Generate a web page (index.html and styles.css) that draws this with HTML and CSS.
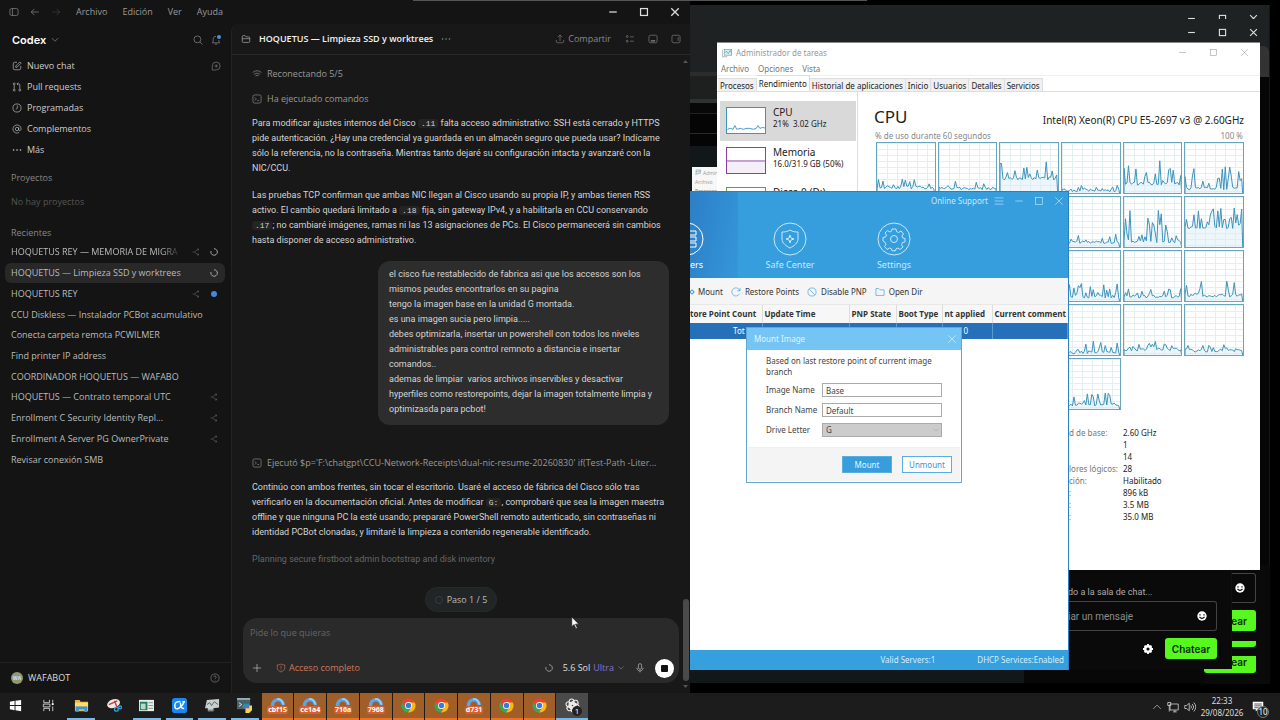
FILE: index.html
```html
<!DOCTYPE html>
<html lang="es">
<head>
<meta charset="utf-8">
<title>Escritorio</title>
<link rel="stylesheet" href="styles.css">
</head>
<body>
<svg class="defs" aria-hidden="true">
  <symbol id="i-panel" viewBox="0 0 16 16"><rect x="1.500" y="2.500" width="13" height="11" rx="2.500"/><path d="M5.500 2.500v11"/></symbol>
  <symbol id="i-back" viewBox="0 0 16 16"><path d="M14 8H2M7 3 2 8l5 5"/></symbol>
  <symbol id="i-fwd" viewBox="0 0 16 16"><path d="M2 8h12M9 3l5 5-5 5"/></symbol>
  <symbol id="i-min" viewBox="0 0 16 16"><path d="M2 8h12"/></symbol>
  <symbol id="i-max" viewBox="0 0 16 16"><rect x="2.500" y="2.500" width="11" height="11"/></symbol>
  <symbol id="i-x" viewBox="0 0 16 16"><path d="m2 2 12 12M14 2 2 14"/></symbol>
  <symbol id="i-down" viewBox="0 0 16 16"><path d="m3 5 5 5 5-5"/></symbol>
  <symbol id="i-up" viewBox="0 0 16 16"><path d="m2 11 6-6 6 6"/></symbol>
  <symbol id="i-search" viewBox="0 0 16 16"><circle cx="7" cy="7" r="5.500"/><path d="m11 11 4 4"/></symbol>
  <symbol id="i-bell" viewBox="0 0 16 16"><path d="M8 2C5 2 3.500 4 3.500 7v3L2 12.500h12L12.500 10V8M6 14.500h4"/></symbol>
  <symbol id="i-edit" viewBox="0 0 16 16"><path d="M8 2H4.500A2.500 2.500 0 0 0 2 4.500v7A2.500 2.500 0 0 0 4.500 14h7a2.500 2.500 0 0 0 2.500-2.500V8M6 10V8l6.500-6.500 2 2L8 10z"/></symbol>
  <symbol id="i-pull" viewBox="0 0 16 16"><circle cx="3.500" cy="3" r="1.500"/><circle cx="3.500" cy="13" r="1.500"/><circle cx="12.500" cy="13" r="1.500"/><path d="M3.500 5v6M12.500 11V5q0-2-2-2H8M10 1 8 3l2 2"/></symbol>
  <symbol id="i-clock" viewBox="0 0 16 16"><circle cx="8" cy="8" r="6.500"/><path d="M8.500 4v4.500L6 10"/></symbol>
  <symbol id="i-at" viewBox="0 0 16 16"><circle cx="8" cy="8" r="2.700"/><path d="M10.700 5.500V9c0 2.500 3.800 2 3.800-1a6.500 6.500 0 1 0-3 5.500"/></symbol>
  <symbol id="i-dots" viewBox="0 0 16 16"><path stroke-width="2.500" stroke-linecap="round" d="M2.500 8h.1M8 8h.1M13.500 8h.1"/></symbol>
  <symbol id="i-newchat" viewBox="0 0 16 16"><path d="M2 14.500V8a6.300 6.300 0 1 1 6.300 6.300zM8.300 5.500v5M5.800 8h5"/></symbol>
  <symbol id="i-branch" viewBox="0 0 16 16"><path d="M1 8h4l6-5h2M5 8l6 5h2M11 1l3 2-3 2M11 11l3 2-3 2"/></symbol>
  <symbol id="i-spin" viewBox="0 0 16 16"><path stroke-width="2" d="M8 1.500A6.500 6.500 0 1 1 2 6"/></symbol>
  <symbol id="i-help" viewBox="0 0 16 16"><circle cx="8" cy="8" r="6.500"/><path d="M6 6.500C6 4 10 4 10 6.500 10 8 8 8 8 9.500M8 11v1"/></symbol>
  <symbol id="i-folder" viewBox="0 0 16 16"><path d="M2 11.500v-7q0-2 2-2h2.500L8 4.500h4q2 0 2 2v5q0 2-2 2H4q-2 0-2-2zM2 7.500h12"/></symbol>
  <symbol id="i-share" viewBox="0 0 16 16"><path d="M8 11V2M4.500 5 8 1.500 11.500 5M2 9.500v2q0 2.500 2.500 2.500h7q2.500 0 2.500-2.500v-2"/></symbol>
  <symbol id="i-list" viewBox="0 0 16 16"><circle cx="3.500" cy="4" r="1.500"/><circle cx="3.500" cy="11.500" r="1.500"/><path d="M8 4.500h6M8 11.500h6"/></symbol>
  <symbol id="i-bottom" viewBox="0 0 16 16"><rect x="1.500" y="2" width="13" height="12" rx="2.500"/><path stroke-width="2" d="M4.500 11h7"/></symbol>
  <symbol id="i-side" viewBox="0 0 16 16"><rect x="1.500" y="2" width="13" height="12" rx="2.500"/><path d="M11.500 5v6"/></symbol>
  <symbol id="i-wifi" viewBox="0 0 16 16"><path d="M1 5.500q7-5.500 14 0M3 8.500q5-4 10 0M5.500 11q2.500-2 5 0M8 13.500h.1"/></symbol>
  <symbol id="i-term" viewBox="0 0 16 16"><rect x="1.500" y="1.500" width="13" height="13" rx="2.500"/><path d="m4.500 5.500 2.500 2.500-2.500 2.500M8.500 10.500h3"/></symbol>
  <symbol id="i-plus" viewBox="0 0 16 16"><path d="M8 1.500v13M1.500 8h13"/></symbol>
  <symbol id="i-shield" viewBox="0 0 16 16"><path d="M8 1.500c2 1.500 4 1.500 6 1.500v5c0 3-3 5-6 6.500C5 13 2 11 2 8V3c2 0 4 0 6-1.500zM8 4.500v4.500M8 10.500v1.500"/></symbol>
  <symbol id="i-mic" viewBox="0 0 16 16"><rect x="5.500" y="1" width="5" height="9" rx="2.500"/><path d="M3 7.500c0 7 10 7 10 0M8 12.500V15"/></symbol>
  <symbol id="i-menu" viewBox="0 0 16 16"><path d="M1 3h14M1 8h14M1 13h14"/></symbol>
  <symbol id="i-redo" viewBox="0 0 16 16"><path d="M13.500 11A6.500 6.500 0 1 1 14 6M14.500 1.500V6H10"/></symbol>
  <symbol id="i-ban" viewBox="0 0 16 16"><circle cx="8" cy="8" r="6.500"/><path d="m3.500 3.500 9 9"/></symbol>
  <symbol id="i-dir" viewBox="0 0 16 16"><path d="M1.500 13.500v-11H6l2 2h6.500v9z"/></symbol>
  <symbol id="i-smile" viewBox="0 0 16 16"><circle cx="8" cy="8" r="7.500" fill="#fff" stroke="none"/><path stroke="#0a0a0a" stroke-width="2" d="M4.800 5v2M11.200 5v2M4 9.500q4 4.500 8 0"/></symbol>
  <symbol id="i-tm" viewBox="0 0 16 16"><rect x="3.500" y="2.500" width="12" height="9" fill="#d8f0f4" stroke="#7a8d92"/><path stroke="#2a9aaa" d="m4 8 3-3 3 4 3-5 2 3"/><path stroke="#7a8d92" d="M.5 3v11h8"/></symbol>
  <symbol id="i-chrome" viewBox="0 0 32 32"><g stroke="none"><circle cx="16" cy="16" r="15" fill="#ea4335"/><path fill="#34a853" d="M3 8.500A15 15 0 0 0 15 31l7-11.500-12 0z"/><path fill="#fbbc05" d="M29.500 9.500A15 15 0 0 1 15 31l7.500-12L16 9.500z"/><circle cx="16" cy="16" r="7.500" fill="#fff"/><circle cx="16" cy="16" r="5.800" fill="#3b78e7"/></g></symbol>
  <symbol id="i-arc" viewBox="0 0 32 20"><path fill="none" stroke="#5aa5e8" stroke-width="8" d="M4 20a12 13 0 0 1 24-2"/><path fill="none" stroke="#a4d5ff" stroke-width="3" d="M14 5q10-3 14 12"/></symbol>
</svg>

<div class="desktop">
<main class="workspace">

  <div class="backdrop">
    <div class="ghost-controls clipped"><svg><use href="#i-min"/></svg><svg><use href="#i-max"/></svg><svg><use href="#i-x"/></svg></div>
    <div class="ghost-controls"><svg><use href="#i-min"/></svg><svg><use href="#i-max"/></svg><svg><use href="#i-x"/></svg></div>
    <div class="band"></div><div class="bands-low"></div>
  </div>
  <div class="mini-task"><span><svg><use href="#i-tm"/></svg>Adminis</span><span>Archivo</span><span><b>Procesos</b></span></div>

  <section class="chat chat-back">
    <div class="chat-field"><svg><use href="#i-smile"/></svg></div>
    <button class="chat-btn">tear</button>
    <div class="sliver"></div>
    <button class="chat-btn low">tear</button>
  </section>
  <section class="chat chat-front">
    <p>do a la sala de chat...</p>
    <div class="chat-field"><input aria-label="Mensaje" placeholder="iar un mensaje"><svg><use href="#i-smile"/></svg></div>
    <div class="chat-actions">
      <svg viewBox="0 0 16 16"><circle cx="8" cy="8" r="4.500" fill="none" stroke="#fff" stroke-width="4"/><path stroke="#fff" stroke-width="3" d="M8 0v3M8 13v3M0 8h3M13 8h3M2.500 2.500l2 2M11.500 11.500l2 2M13.500 2.500l-2 2M4.500 11.500l-2 2"/></svg>
      <button class="chat-btn">Chatear</button>
    </div>
  </section>

  <section class="task">
    <header class="task-title"><svg><use href="#i-tm"/></svg><span>Administrador de tareas</span>
      <div class="task-controls"><svg><use href="#i-min"/></svg><svg><use href="#i-max"/></svg><svg><use href="#i-x"/></svg></div></header>
    <nav class="task-menu"><span>Archivo</span><span>Opciones</span><span>Vista</span></nav>
    <div class="tabs"><button>Procesos</button><button class="on">Rendimiento</button><button>Historial de aplicaciones</button><button>Inicio</button><button>Usuarios</button><button>Detalles</button><button>Servicios</button></div>
    <div class="task-body">
      <aside class="meters">
        <div class="meter on"><svg viewBox="0 0 40 27" class="thumb cpu"><path d="M0 23l3-1 3 1 2-4 2 4 4-1 3 1 4-1 3 0 4 1 3-1 2-3 2 3 3-1 4 1"/></svg><div><h3>CPU</h3><p>21%&nbsp; 3.02 GHz</p></div></div>
        <div class="meter"><svg viewBox="0 0 40 27" class="thumb mem"><path d="M-2 14h44v16H-2z"/></svg><div><h3>Memoria</h3><p>16.0/31.9 GB (50%)</p></div></div>
        <div class="meter"><svg viewBox="0 0 40 27" class="thumb disk"></svg><div><h3>Disco 0 (D:)</h3></div></div>
      </aside>
      <div class="perf">
        <div class="perf-head"><h2>CPU</h2><span>Intel(R) Xeon(R) CPU E5-2697 v3 @ 2.60GHz</span></div>
        <div class="perf-axis"><span>% de uso durante 60 segundos</span><span>100 %</span></div>
        <div class="cores" id="cores"></div>
        <dl class="stats">
          <dt>d de base:</dt><dd>2.60 GHz</dd><dt></dt><dd>1</dd><dt></dt><dd>14</dd><dt>lores lógicos:</dt><dd>28</dd><dt>ción:</dt><dd>Habilitado</dd><dt>:</dt><dd>896 kB</dd><dt>:</dt><dd>3.5 MB</dd><dt>:</dt><dd>35.0 MB</dd>
        </dl>
      </div>
    </div>
  </section>

  <section class="client">
    <header class="client-head">
      <div class="client-tab"><svg class="big" viewBox="0 0 34 34"><circle cx="17" cy="17" r="16"/><path d="M14 9h12v4H14zM14 15h12v4H14zM14 21h12v4H14z"/></svg><span>ers</span></div>
      <div class="client-nav"><svg class="big" viewBox="0 0 34 34"><circle cx="17" cy="17" r="16"/><path d="M17 8c3 2 6 2 8 2v7c0 4-4 7-8 9-4-2-8-5-8-9v-7c2 0 5 0 8-2zM17 13l1 3 3 1-3 1-1 3-1-3-3-1 3-1z"/></svg><span>Safe Center</span></div>
      <div class="client-nav"><svg class="big" viewBox="0 0 34 34"><circle cx="17" cy="17" r="16"/><circle cx="17" cy="17" r="3.500"/><path d="M15 7h4l.5 2.500 2 1L24 9l2.500 3-1.500 2 .7 2 2.300.5v3.500l-2.500.5-1 2 1.500 2.500-3 2.500-2-1.500-2 .8-.5 2h-3.500l-.5-2-2-.8-2.500 1.500-2.500-3 1.500-2-1-2.200L6 19v-3.500l2.500-.5 1-2L8 11l2.500-2.500L13 10l1.500-.8z"/></svg><span>Settings</span></div>
      <div class="client-top"><span>Online Support</span><svg><use href="#i-menu"/></svg><svg><use href="#i-min"/></svg><svg><use href="#i-max"/></svg><svg><use href="#i-x"/></svg></div>
    </header>
    <div class="client-tools"><button><i></i>Mount</button><button><svg><use href="#i-redo"/></svg>Restore Points</button><button><svg><use href="#i-ban"/></svg>Disable PNP</button><button><svg><use href="#i-dir"/></svg>Open Dir</button></div>
    <table class="client-table">
      <colgroup><col class="c1"><col class="c2"><col class="c3"><col class="c4"><col class="c5"><col></colgroup>
      <tr><th>tore Point Count</th><th>Update Time</th><th>PNP State</th><th>Boot Type</th><th>nt applied</th><th>Current comment</th></tr>
      <tr class="sel"><td class="tot">Tot</td><td></td><td></td><td></td><td class="zero">0</td><td></td></tr>
    </table>
    <footer class="client-foot"><span>Valid Servers:1</span><span>DHCP Services:Enabled</span></footer>
  </section>

  <form class="dialog" onsubmit="return false">
    <header><span>Mount Image</span><button type="button" aria-label="Cerrar"><svg><use href="#i-x"/></svg></button></header>
    <div class="dialog-body">
      <p>Based on last restore point of current image<br>branch</p>
      <label for="img">Image Name</label><input id="img" value="Base">
      <label for="br">Branch Name</label><input id="br" value="Default">
      <label for="dl">Drive Letter</label><div class="pick"><select id="dl"><option>G</option></select><svg><use href="#i-down"/></svg></div>
    </div>
    <footer><button type="button" class="primary">Mount</button><button type="button">Unmount</button></footer>
  </form>

  <section class="codex">
    <header class="codex-bar">
      <svg><use href="#i-panel"/></svg><svg><use href="#i-back"/></svg><svg class="off"><use href="#i-fwd"/></svg>
      <nav><span>Archivo</span><span>Edición</span><span>Ver</span><span>Ayuda</span></nav>
      <div class="codex-controls"><svg><use href="#i-min"/></svg><svg><use href="#i-max"/></svg><svg><use href="#i-x"/></svg></div>
    </header>
    <div class="codex-main">
      <aside class="side">
        <div class="brand"><h1>Codex</h1><svg><use href="#i-down"/></svg><span class="grow"></span><svg><use href="#i-search"/></svg><span class="bell"><svg><use href="#i-bell"/></svg></span></div>
        <ul class="nav">
          <li><svg><use href="#i-edit"/></svg><span>Nuevo chat</span><svg class="end"><use href="#i-newchat"/></svg></li>
          <li><svg><use href="#i-pull"/></svg><span>Pull requests</span></li>
          <li><svg><use href="#i-clock"/></svg><span>Programadas</span></li>
          <li><svg><use href="#i-at"/></svg><span>Complementos</span></li>
          <li><svg><use href="#i-dots"/></svg><span>Más</span></li>
        </ul>
        <h4>Proyectos</h4><p class="empty">No hay proyectos</p><h4>Recientes</h4>
        <ul class="recent">
          <li><span class="fade">HOQUETUS REY — MEMORIA DE MIGRA</span><svg><use href="#i-branch"/></svg><svg class="lit"><use href="#i-spin"/></svg></li>
          <li class="on"><span>HOQUETUS — Limpieza SSD y worktrees</span><svg class="lit"><use href="#i-spin"/></svg></li>
          <li><span>HOQUETUS REY</span><svg><use href="#i-branch"/></svg><i class="dot"></i></li>
          <li><span>CCU Diskless — Instalador PCBot acumulativo</span></li>
          <li><span>Conecta carpeta remota PCWILMER</span></li>
          <li><span>Find printer IP address</span></li>
          <li><span>COORDINADOR HOQUETUS — WAFABO</span></li>
          <li><span>HOQUETUS — Contrato temporal UTC</span><svg><use href="#i-branch"/></svg></li>
          <li><span>Enrollment C Security Identity Repl...</span><svg><use href="#i-branch"/></svg></li>
          <li><span>Enrollment A Server PG OwnerPrivate</span><svg><use href="#i-branch"/></svg></li>
          <li><span>Revisar conexión SMB</span></li>
        </ul>
        <footer class="user"><b>WA</b><span>WAFABOT</span><svg><use href="#i-help"/></svg></footer>
      </aside>
      <article class="thread">
        <header class="thread-head"><svg class="lit"><use href="#i-folder"/></svg><h2>HOQUETUS — Limpieza SSD y worktrees</h2><svg><use href="#i-dots"/></svg><span class="grow"></span>
          <button><svg><use href="#i-share"/></svg>Compartir</button><svg><use href="#i-list"/></svg><svg><use href="#i-bottom"/></svg><svg><use href="#i-side"/></svg></header>
        <div class="feed">
          <div class="event"><svg><use href="#i-wifi"/></svg>Reconectando 5/5</div>
          <div class="event"><svg><use href="#i-term"/></svg>Ha ejecutado comandos</div>
          <p>Para modificar ajustes internos del Cisco <code>.11</code> falta acceso administrativo: SSH está cerrado y HTTPS<br>pide autenticación. ¿Hay una credencial ya guardada en un almacén seguro que pueda usar? Indícame<br>sólo la referencia, no la contraseña. Mientras tanto dejaré su configuración intacta y avanzaré con la<br>NIC/CCU.</p>
          <p>Las pruebas TCP confirman que ambas NIC llegan al Cisco usando su propia IP, y ambas tienen RSS<br>activo. El cambio quedará limitado a <code>.18</code> fija, sin gateway IPv4, y a habilitarla en CCU conservando<br><code>.17</code>; no cambiaré imágenes, ramas ni las 13 asignaciones de PCs. El Cisco permanecerá sin cambios<br>hasta disponer de acceso administrativo.</p>
          <div class="bubble">el cisco fue restablecido de fabrica asi que los accesos son los<br>mismos peudes encontrarlos en su pagina<br>tengo la imagen base en la unidad G montada.<br>es una imagen sucia pero limpia.....<br>debes optimizarla, insertar un powershell con todos los niveles<br>administrables para control remnoto a distancia e insertar<br>comandos..<br>ademas de limpiar &nbsp;varios archivos inservibles y desactivar<br>hyperfiles como restorepoints, dejar la imagen totalmente limpia y<br>optimizasda para pcbot!</div>
          <div class="event">
            <svg><use href="#i-term"/></svg>Ejecutó $p='F:\chatgpt\CCU-Network-Receipts\dual-nic-resume-20260830' if(Test-Path -Liter...</div>
          <p>Continúo con ambos frentes, sin tocar el escritorio. Usaré el acceso de fábrica del Cisco sólo tras<br>verificarlo en la documentación oficial. Antes de modificar <code>G:</code>, comprobaré que sea la imagen maestra<br>offline y que ninguna PC la esté usando; prepararé PowerShell remoto autenticado, sin contraseñas ni<br>identidad PCBot clonadas, y limitaré la limpieza a contenido regenerable identificado.</p>
          <div class="planning">Planning secure firstboot admin bootstrap and disk inventory</div>
        </div>
        <div class="step"><i></i>Paso 1 / 5</div>
        <div class="composer">
          <textarea rows="1" aria-label="Mensaje" placeholder="Pide lo que quieras"></textarea>
          <div class="composer-row"><svg class="lit"><use href="#i-plus"/></svg><button class="access"><svg><use href="#i-shield"/></svg>Acceso completo</button><span class="grow"></span>
            <svg class="busy"><use href="#i-spin"/></svg><button class="model">5.6 Sol <em>Ultra</em><svg><use href="#i-down"/></svg></button><svg class="lit"><use href="#i-mic"/></svg><button class="stop" aria-label="Detener"></button></div>
        </div>
        <div class="scroll"></div>
      </article>
    </div>
  </section>
  <div class="top-edge"></div>
  <svg class="cursor" viewBox="0 0 12 18"><path fill="#fff" stroke="#222" d="M1 1v13l3-3 2.500 5.500 2-1L6 10.500h4.500z"/></svg>
</main>

<footer class="taskbar">
  <div class="apps">
    <button aria-label="Inicio"><svg viewBox="0 0 16 16"><path fill="#fff" d="M2 4l5-1v4.500H2zM8 3l6-1v5.500H8zM2 8.500h5V13l-5-1zM8 8.500h6V14l-6-1z"/></svg></button>
    <button aria-label="Vista de tareas"><svg viewBox="0 0 16 16"><path fill="none" stroke="#ccc" d="M3 2v3h6V2M3 14v-3h6v3M2.500 6.500h7v3h-7zM12.500 2v3M12.500 9v5"/><path fill="#fff" d="M11.500 5.500h2v2h-2z"/></svg></button>
    <button class="run" aria-label="Explorador"><svg viewBox="0 0 16 16"><path fill="#e9b93c" d="M1 2h5l1 2h8v10H1z"/><path fill="#ffdc70" d="M1 5h14v4H1z"/><path fill="#3a94da" d="M2 9h12v6h-3v-3H5v3H2z"/></svg></button>
    <button aria-label="Recortes"><svg viewBox="0 0 16 16"><ellipse cx="7" cy="6" rx="7" ry="4.500" fill="#f0e7e7" transform="rotate(-18 7 6)"/><path fill="none" stroke="#c33d43" stroke-width="1.500" d="M2 7l9-4M8 3l3 8"/><circle cx="10" cy="12" r="2" fill="none" stroke="#2e9fd5" stroke-width="1.500"/><circle cx="14" cy="10" r="1.500" fill="none" stroke="#2e9fd5" stroke-width="1.500"/></svg></button>
    <button class="run" aria-label="Servidor"><svg viewBox="0 0 16 16"><path fill="#e8eee9" d="M0 2h16v12H0z"/><path fill="#247d5a" d="M1 4h8v9H1z"/><path fill="#bcd8cb" d="M2 6h5v6H2z"/><path stroke="#7f9588" d="M10 5h5M10 8h5M10 11h5"/></svg></button>
    <button class="run" aria-label="Alfa"><svg viewBox="0 0 16 16"><rect width="16" height="16" rx="3" fill="#1787f2"/><path fill="none" stroke="#fff" stroke-width="1.500" d="M9 4q-6-1-6 4t4 3 6-7M9 5q0 7 4 6M11 4h3"/></svg></button>
    <button class="run" aria-label="Monitor"><svg viewBox="0 0 16 16"><path fill="#c9cfcf" d="M2 2l13-1v9l-6 1v3H3v-3H0z"/><path fill="none" stroke="#4d6466" d="M2 7l3-2 2 3 3-4 4 3M3 13h7"/></svg></button>
    <button class="run" aria-label="Python"><svg viewBox="0 0 16 16"><path fill="#4b6067" d="M0 0h14v12H0z"/><path fill="#91b0b7" d="M0 0h14v2H0z"/><path stroke="#d5e6e8" d="M2 5l3 2-3 2"/><path fill="#3f83b9" d="M8 6h5v5H6V8z"/><path fill="#f6d451" d="M9 11h4V8h3v5l-3 3H9z"/></svg></button>
    <button class="hot"><svg class="arc"><use href="#i-arc"/></svg><b>cbf15</b></button>
    <button class="hot"><svg class="arc"><use href="#i-arc"/></svg><b>ce1a4</b></button>
    <button class="hot"><svg class="arc"><use href="#i-arc"/></svg><b>716a</b></button>
    <button class="hot"><svg class="arc"><use href="#i-arc"/></svg><b>7968</b></button>
    <button class="hot" aria-label="Chrome"><svg><use href="#i-chrome"/></svg></button>
    <button class="hot" aria-label="Chrome"><svg><use href="#i-chrome"/></svg></button>
    <button class="hot"><svg class="arc"><use href="#i-arc"/></svg><b>d731</b></button>
    <button class="hot" aria-label="Chrome"><svg><use href="#i-chrome"/></svg></button>
    <button class="hot" aria-label="Chrome"><svg><use href="#i-chrome"/></svg></button>
    <button class="cur"><svg viewBox="0 0 16 16"><g fill="none" stroke="#eee" stroke-width="1.200"><rect x="4.500" y="1" width="5" height="10" rx="2.500"/><rect x="4.500" y="1" width="5" height="10" rx="2.500" transform="rotate(60 8 8)"/><rect x="4.500" y="1" width="5" height="10" rx="2.500" transform="rotate(120 8 8)"/><rect x="4.500" y="1" width="5" height="10" rx="2.500" transform="rotate(180 8 8)"/><rect x="4.500" y="1" width="5" height="10" rx="2.500" transform="rotate(240 8 8)"/><rect x="4.500" y="1" width="5" height="10" rx="2.500" transform="rotate(300 8 8)"/></g></svg><span class="badge">1</span></button>
  </div>
  <div class="tray">
    <svg class="chev"><use href="#i-up"/></svg>
    <svg viewBox="0 0 16 16"><path d="M4 4h11v8H4zM8 14.500h5M10.500 12v2.500M1 2h4v4H1zM3 6v8"/></svg>
    <svg viewBox="0 0 16 16"><path d="M1 6h2.500L7 3v10l-3.500-3H1zM9 6q2 2 0 4M11 4q4 4 0 8M13 2q5.500 6 0 12"/></svg>
    <div class="time"><span>22:33</span><span>29/08/2026</span></div>
    <div class="note"><svg viewBox="0 0 16 16"><path fill="#fff" stroke="none" d="M1 1h14v10H8l-3 3v-3H1z"/><path stroke="#222" d="M3 4h10M3 6.500h10M3 9h6"/></svg><span class="badge">10</span></div>
  </div>
</footer>
</div>
<script src="cores.js"></script>
</body>
</html>
```
FILE: styles.css
```css
:root { --ui: "Open Sans", "Noto Sans", sans-serif; --tight: "Noto Sans", sans-serif; }
* { box-sizing: border-box; margin: 0; padding: 0; }
body { font: 8px/12px var(--ui); color: #ddd; background: #000; overflow: hidden; }
button, input, select, textarea { font: inherit; color: inherit; background: none; border: 0; border-radius: 0; outline: 0; }
ul { list-style: none; }
svg { fill: none; stroke: currentColor; width: 10px; height: 10px; flex: none; display: block; }
.defs { position: absolute; width: 0; height: 0; }
.grow { flex: 1; }
.desktop { height: 100vh; display: flex; flex-direction: column; }
.workspace { flex: 1; position: relative; overflow: hidden; background: #000; }

/* Windows behind */
.backdrop { position: absolute; left: 690px; top: 5px; right: 10px; bottom: 10px; background: linear-gradient(90deg, #12171a 334px, #080808 334px); border-right: 1px solid #161616; }
.backdrop::before { content: ""; display: block; position: absolute; inset: 0 0 auto; height: 141px; background: linear-gradient(#1e2222 67px, #2b2d2d 67px 71px, #1e2020 71px 94px, #303232 94px 98px, #080808 98px 108px, #222 108px 109px, #050505 109px 128px, #2a2a2a 128px 129px, #050505 129px); }
.ghost-controls { position: relative; display: flex; justify-content: flex-end; gap: 22px; padding: 9px 11px 0 0; color: #ddd; height: 15px; }
.ghost-controls svg { width: 9px; height: 9px; stroke-width: 2; }
.ghost-controls.clipped { height: 14px; overflow: hidden; }
.band { position: absolute; right: 0; top: 41px; width: 10px; height: 31px; background: #333; border-radius: 0 6px 0 0; }
.bands-low { position: absolute; right: 0; top: 72px; width: 10px; height: 580px; background: #060606; border-left: 1px solid #181818; }
.mini-task { position: absolute; left: 692px; top: 167px; width: 40px; height: 40px; background: #f7f7f7; color: #999; font-size: 5px; line-height: 9px; display: flex; flex-direction: column; padding: 2px 3px; }
.mini-task span { display: flex; gap: 2px; }
.mini-task svg { width: 6px; height: 6px; }
.top-edge { position: absolute; left: 413px; top: 0; width: 454px; height: 1px; background: #555; }

.chat { position: absolute; background: #0a0a0a; }
.chat-back { left: 1204px; top: 565px; width: 66px; height: 119px; padding: 8px 14px 0 0; display: flex; flex-direction: column; align-items: flex-end; }
.chat-back .chat-field { width: 52px; justify-content: flex-end; padding-right: 10px; }
.chat-back .chat-btn { width: 52px; height: 21px; margin-top: 7px; text-align: right; padding-right: 9px; }
.chat-back .sliver { width: 52px; height: 6px; margin-top: 10px; background: #57f820; border-radius: 0 0 3px 3px; }
.chat-back .chat-btn.low { height: 17px; margin-top: 9px; border-radius: 0 0 3px 3px; line-height: 13px; padding-bottom: 4px; }
.chat-front { left: 1068px; top: 570px; width: 164px; height: 99px; padding-right: 14px; border-right: 1px solid #111; }
.chat-front p { padding-top: 16px; height: 31px; color: #aaa; font: 9px/13px Roboto, sans-serif; white-space: nowrap; }
.chat-field { height: 30px; border: 1px solid #444; border-left: 0; border-radius: 0 3px 3px 0; display: flex; align-items: center; padding-right: 9px; }
.chat-field input { flex: 1; min-width: 0; font: 10px Roboto, sans-serif; }
.chat-field input::placeholder { color: #8c8c8c; opacity: 1; }
.chat-btn { background: #57f820; color: #0a2a05; border-radius: 3px; font: 600 10px Inter, sans-serif; }
.chat-actions { display: flex; justify-content: flex-end; align-items: center; gap: 12px; padding-top: 7px; }
.chat-actions .chat-btn { width: 52px; height: 21px; }

/* Task manager */
.task { position: absolute; left: 717px; top: 42px; width: 543px; height: 528px; background: #fff; color: #222; border-top: 1px solid #888; display: flex; flex-direction: column; font-family: var(--tight); }
.task-title { display: flex; align-items: center; gap: 4px; height: 19px; padding-left: 5px; color: #999; }
.task-controls { margin-left: auto; display: flex; gap: 22px; padding-right: 11px; }
.task-controls svg { width: 9px; height: 9px; }
.task-menu { display: flex; gap: 9px; padding: 0 4px; height: 14px; line-height: 13px; color: #777; border-bottom: 1px solid #f0f0f0; }
.tabs { display: flex; align-items: flex-end; height: 16px; padding-left: 1px; border-bottom: 1px solid #ddd; }
.tabs button { height: 13px; padding: 0 2px; border: 1px solid #ddd; border-bottom: 0; border-left: 0; background: #f0f0f0; line-height: 11px; }
.tabs .on { height: 16px; background: #fff; line-height: 13px; }
.task-body { flex: 1; display: flex; }
.meters { width: 140px; padding: 9px 0 0 3px; }
.meter { display: flex; gap: 7px; height: 40px; width: 136px; padding: 6px 6px 0; }
.meter.on { background: #d9d9d9; }
.meter h3 { font-size: 10px; font-weight: 400; line-height: 11px; }
.meter p { line-height: 11px; }
.thumb { width: 40px; height: 27px; background: #fff; border: 1px solid #3d94bd; color: #3d94bd; }
.thumb.mem { border-color: #8b3fa8; color: #8b3fa8; fill: #f4eef7; }
.thumb.disk { border-color: #6a9e3a; }
.perf { flex: 1; padding: 12px 16px 0; border-left: 1px solid #ddd; min-width: 0; }
.perf-head { display: flex; justify-content: space-between; align-items: center; height: 26px; }
.perf-head h2 { font-size: 17px; font-weight: 400; line-height: 24px; }
.perf-head span { font-size: 10px; padding-top: 5px; }
.perf-axis { display: flex; justify-content: space-between; color: #888; padding: 0 1px; line-height: 12px; height: 12px; }
.cores { display: grid; grid-template-columns: repeat(6, 1fr); grid-auto-rows: 52px; gap: 2px; padding-left: 2px; }
.core { width: 100%; height: 52px; border: 1px solid #67a6bd; color: #3d94bd; background: repeating-linear-gradient(90deg, #e4eff2 0 1px, transparent 1px 10px), repeating-linear-gradient(#e4eff2 0 1px, transparent 1px 6px), #fff; }
.core path { fill: #d9eef7; fill-opacity: .5; vector-effect: non-scaling-stroke; }
.stats { display: grid; grid-template-columns: 54px auto; grid-auto-rows: 12px; padding: 17px 0 0 195px; justify-content: start; white-space: nowrap; }
.stats dt { color: #777; }

/* Disk client */
.client { position: absolute; left: 690px; top: 191px; width: 379px; height: 479px; background: #fff; color: #333; border: 1px solid #2b80c4; border-left: 0; border-bottom: 0; display: flex; flex-direction: column; font-family: var(--tight); }
.client-head { position: relative; height: 86px; flex: none; background: #369edd; color: #c5e8fc; display: flex; font-size: 9px; }
.client-tab, .client-nav { display: flex; flex-direction: column; align-items: center; padding-top: 30px; gap: 3px; width: 104px; }
.client-tab { width: 48px; align-items: flex-start; background: linear-gradient(100deg, #2c7fc6, #3596d8); color: #fff; }
.client-tab .big { margin-left: -20px; }
.big { width: 34px; height: 34px; }
.client-top { position: absolute; right: 4px; top: 3px; display: flex; align-items: center; gap: 10px; font-size: 8px; }
.client-top span { margin-right: -4px; }
.client-tools { height: 27px; flex: none; background: #f5f5f5; display: flex; align-items: center; gap: 8px; padding-top: 1px; border-bottom: 1px solid #e8e8e8; }
.client-tools button { display: flex; align-items: center; gap: 4px; }
.client-tools svg { color: #3a9bd8; }
.client-tools i { width: 4px; height: 4px; border: 1px solid #3a9bd8; transform: rotate(45deg); }
.client-table { border-collapse: collapse; width: 100%; table-layout: fixed; }
.c1 { width: 72px; } .c2 { width: 87px; } .c3 { width: 47px; } .c4 { width: 46px; } .c5 { width: 50px; }
.client-table th { height: 18px; background: #f7f7f7; border-right: 1px solid #ddd; text-align: left; padding-left: 2px; white-space: nowrap; font-family: var(--ui); }
.client-table th:first-child { padding-left: 0; }
.client-table th:last-child { border-right: 0; padding-left: 2px; }
.client-table .sel td { height: 16px; background: #2570b8; color: #fff; border-right: 1px solid #5a9ad0; }
.client-table .sel .tot { padding-left: 43px; }
.client-table .sel .zero { padding-left: 21px; }
.client-foot { margin-top: auto; height: 20px; background: #369fde; color: #d5effd; display: flex; justify-content: flex-end; align-items: center; gap: 42px; padding-right: 4px; }

.dialog { position: absolute; left: 746px; top: 327px; width: 216px; height: 156px; background: #fff; border: 1px solid #62a7cd; color: #444; display: flex; flex-direction: column; font-family: var(--tight); }
.dialog header { height: 22px; flex: none; background: #74c4f4; color: #e0f4ff; display: flex; justify-content: space-between; align-items: center; padding: 0 4px 0 7px; }
.dialog-body { display: grid; grid-template-columns: 56px 120px; row-gap: 6px; align-items: center; padding: 5px 0 0 19px; }
.dialog-body p { grid-column: 1 / -1; line-height: 11px; white-space: nowrap; }
.dialog-body input, .dialog-body select { width: 120px; height: 14px; border: 1px solid #aaa; padding: 0 3px; display: block; }
.dialog-body select { appearance: none; background: #ccc; }
.pick { position: relative; color: #999; }
.pick select { color: #444; }
.pick svg { position: absolute; right: 2px; top: 3px; width: 8px; height: 8px; }
.dialog footer { margin: auto 1px 1px; height: 34px; background: #f4f4f4; display: flex; justify-content: flex-end; align-items: center; gap: 10px; padding-right: 8px; border-top: 1px solid #eee; }
.dialog footer button { width: 50px; height: 17px; border: 1px solid #5aaddd; color: #3a94cc; background: #fff; line-height: 13px; }
.dialog footer .primary { background: #369edd; color: #e0f4ff; }

/* Codex */
.codex { position: absolute; left: 0; top: 0; width: 690px; height: 100%; background: #141414; display: flex; flex-direction: column; }
.codex-bar { height: 24px; flex: none; display: flex; align-items: center; gap: 11px; padding-left: 9px; color: #999; }
.codex-bar .off { color: #444; }
.codex-bar nav { display: flex; gap: 15px; margin-left: 4px; font-size: 9px; }
.codex-controls { margin-left: auto; display: flex; gap: 21px; padding-right: 10px; color: #ddd; }
.codex-controls svg { stroke-width: 2; }
.codex-main { flex: 1; display: flex; min-height: 0; }
.side { width: 231px; display: flex; flex-direction: column; padding: 5px 6px 0 5px; color: #ccc; }
.brand { display: flex; align-items: center; gap: 4px; height: 22px; padding: 0 4px 0 7px; }
.brand h1 { font: 600 11px/14px Inter, sans-serif; color: #fff; }
.brand svg { color: #999; }
.bell { position: relative; margin-left: 4px; }
.bell::after { content: ""; position: absolute; right: 0; top: 0; width: 4px; height: 4px; border-radius: 50%; background: #4a8fe8; }
.nav { display: grid; grid-auto-rows: 1fr; height: 104px; margin-top: 5px; }
.nav li { display: flex; align-items: center; gap: 5px; padding: 0 4px 0 7px; font-size: 9px; }
.nav .end { margin-left: auto; color: #888; }
.side h4 { font-weight: 400; font-size: 9px; color: #888; padding-left: 6px; height: 24px; line-height: 16px; }
.nav + h4 { margin-top: 10px; }
.empty { color: #555; padding-left: 6px; font-size: 9px; height: 31px; line-height: 16px; }
.recent { display: grid; grid-auto-rows: 1fr; height: 228px; margin-top: -7px; }
.recent li { display: flex; align-items: center; gap: 10px; padding: 0 7px 0 6px; border-radius: 6px; white-space: nowrap; color: #bbb; }
.recent li span { flex: 1; font-size: 9px; }
.recent li.on { background: #282828; }
.recent svg { width: 8px; height: 8px; color: #777; }
.recent .lit { color: #aaa; }
.recent .fade { -webkit-mask-image: linear-gradient(90deg, #000 88%, transparent); mask-image: linear-gradient(90deg, #000 88%, transparent); overflow: hidden; }
.dot { width: 6px; height: 6px; border-radius: 50%; background: #4a85dd; margin: 0 1px; }
.user { margin: auto -6px 0 -5px; height: 31px; border-top: 1px solid #222; display: flex; align-items: center; gap: 5px; padding: 0 11px; font-size: 9px; color: #ddd; }
.user b { width: 12px; height: 12px; border-radius: 50%; background: #8f9a72; font-size: 5px; line-height: 12px; text-align: center; color: #dde; }
.user svg { margin-left: auto; color: #888; }
.thread { position: relative; flex: 1; min-width: 0; background: #181818; border-left: 1px solid #222; border-radius: 8px 0 0 0; display: flex; flex-direction: column; }
.thread::before, .thread::after { content: ""; position: absolute; right: 2px; width: 5px; height: 3px; background: #555; }
.thread::before { top: 36px; clip-path: polygon(50% 0, 100% 100%, 0 100%); }
.thread::after { bottom: 5px; clip-path: polygon(0 0, 100% 0, 50% 100%); }
.thread-head { height: 31px; flex: none; border-bottom: 1px solid #2a2a2a; display: flex; align-items: center; gap: 8px; padding: 0 9px; color: #888; }
.thread-head h2 { font-size: 9px; color: #f2f2f2; font-weight: 600; }
.thread-head .lit { color: #bbb; }
.thread-head button { display: flex; gap: 3px; align-items: center; font-size: 9px; margin-right: 6px; }
.thread-head button ~ svg:not(:last-child) { margin-right: 5px; }
.feed { padding: 11px 10px 0 20px; display: flex; flex-direction: column; align-items: flex-start; white-space: nowrap; line-height: 15px; color: #d5d5d5; font-size: 9px; }
.event { display: flex; align-items: center; gap: 5px; height: 15px; margin-bottom: 10px; color: #999; }
.feed p, .bubble, .planning { font-family: Roboto, sans-serif; }
.feed p { margin-bottom: 12px; }
.feed code { font: 8px/10px "Liberation Mono", monospace; background: #242424; border-radius: 3px; padding: 0 3px; }
.bubble { align-self: flex-end; width: 291px; background: #2d2d2d; border-radius: 12px; padding: 6px 11px 8px; margin: 1px 11px 30px 0; }
.planning { color: #666; }
.step { margin: auto auto 6px; display: flex; align-items: center; gap: 4px; height: 25px; width: 72px; justify-content: center; border-radius: 12px; background: #222525; border: 1px solid #272a2a; color: #bbb; font-size: 9px; }
.step i { width: 8px; height: 8px; border: 1px solid #333d44; border-radius: 50%; }
.composer { margin: 0 11px 10px; height: 65px; flex: none; background: #2a2a2a; border-radius: 14px; padding: 8px 5px 3px 7px; display: flex; flex-direction: column; justify-content: space-between; }
.composer textarea { resize: none; font-size: 9px; line-height: 14px; height: 16px; width: 100%; }
.composer textarea::placeholder { color: #666; opacity: 1; }
.composer-row { display: flex; align-items: center; gap: 10px; height: 24px; color: #999; font-size: 9px; padding-left: 2px; }
.composer-row button { display: flex; align-items: center; gap: 3px; }
.composer-row .busy { width: 8px; height: 8px; }
.lit { color: #ccc; }
.composer-row .access { color: #d07858; margin-left: 4px; }
.model { color: #ddd; }
.model em { font-style: normal; color: #8b6fd0; }
.model svg { width: 8px; height: 8px; color: #999; }
.composer-row .stop { width: 19px; height: 19px; border-radius: 50%; background: #fff; justify-content: center; }
.stop::after { content: ""; width: 7px; height: 7px; background: #111; border-radius: 1px; }
.scroll { position: absolute; right: 1px; bottom: 12px; width: 6px; height: 82px; background: #4a4a4a; border-radius: 3px; }
.cursor { position: absolute; left: 571px; top: 616px; width: 9px; height: 14px; }

/* Taskbar */
.taskbar { height: 27px; flex: none; background: #1c1c1c; display: flex; justify-content: space-between; }
.apps { display: flex; width: 588px; gap: 1px; }
.apps button { flex: 1; min-width: 0; position: relative; display: flex; flex-direction: column; align-items: center; justify-content: center; border-bottom: 2px solid transparent; }
.apps svg { width: 15px; height: 15px; stroke: none; }
.apps .run::after { content: ""; position: absolute; left: 2px; right: 2px; bottom: -2px; height: 2px; background: #76b9ed; }
.apps .hot { background: #a05e28; border-bottom-color: #f07020; }
.apps .arc { width: 16px; height: 9px; }
.apps b { background: #d8602c; color: #fff; font: bold 7px/8px var(--tight); border-radius: 3px; padding: 0 1px; }
.apps .cur { background: #4a4a4a; border-bottom-color: #76b9ed; }
.badge { position: absolute; right: 6px; bottom: 2px; width: 10px; height: 10px; border-radius: 50%; background: #222; color: #fff; font-size: 8px; line-height: 10px; text-align: center; }
.tray { display: flex; align-items: center; gap: 5px; color: #ddd; padding-right: 16px; font-family: var(--tight); }
.tray svg { width: 12px; height: 12px; }
.tray .chev { width: 10px; height: 10px; }
.time { display: flex; flex-direction: column; align-items: center; width: 42px; }
.note { position: relative; margin-left: 4px; }
.tray .note .badge { right: -5px; bottom: -5px; border: 1px solid #777; width: 12px; height: 12px; }
```
FILE: cores.js
```js
// level = resting height, peak = spike height, both out of 50; rate = how often a spike appears
const shapes = [
  [4, 10, .3], [3, 10, .2], [13, 18, .3], [1, 5, .2], [8, 22, .4], [3, 26, .35],
  [5, 10, .3], [5, 10, .3], [5, 12, .3], [3, 16, .3], [4, 32, .3], [18, 20, .5],
  [4, 8, .3], [4, 8, .3], [4, 8, .3], [3, 14, .3], [3, 10, .3], [4, 16, .3],
  [4, 8, .3], [4, 8, .3], [4, 8, .3], [1, 10, .3], [4, 7, .4], [3, 6, .3],
  [4, 8, .3], [4, 8, .3], [4, 8, .3], [3, 12, .3]
];
let seed = 11;
const next = () => (seed = (seed * 16807) % 2147483647) / 2147483647;
document.getElementById('cores').innerHTML = shapes.map(([level, peak, rate]) => {
  let d = 'M0 50';
  for (let x = 0; x <= 58; x += 1.5) {
    const h = level + next() * 3 + (next() < rate ? next() * peak : 0);
    d += `L${x} ${(50 - h).toFixed(1)}`;
  }
  return `<svg class="core" viewBox="0 0 58 50" preserveAspectRatio="none"><path d="${d}L58 50"/></svg>`;
}).join('');
```
